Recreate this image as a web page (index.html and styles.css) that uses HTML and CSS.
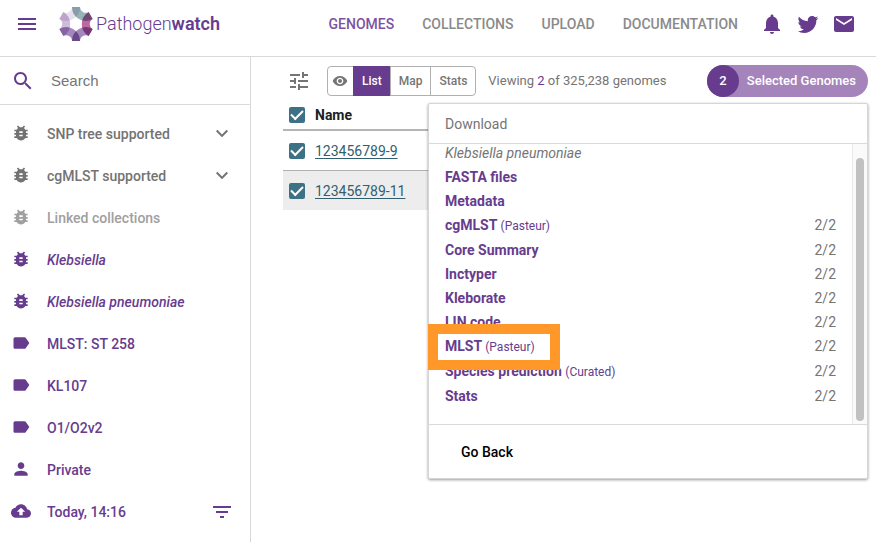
FILE: index.html
```html
<!DOCTYPE html>
<html lang="en">
<head>
<meta charset="utf-8">
<meta name="viewport" content="width=device-width, initial-scale=1">
<title>Pathogenwatch</title>
<link rel="stylesheet" href="styles.css">
</head>
<body>
<svg class="sprite" aria-hidden="true">
  <symbol id="bug" viewBox="0 0 24 24"><path d="M20 8h-2.81c-.45-.78-1.07-1.45-1.82-1.96L17 4.41 15.59 3l-2.17 2.17C12.96 5.06 12.49 5 12 5s-.96.06-1.41.17L8.41 3 7 4.41l1.62 1.63C7.88 6.55 7.26 7.22 6.81 8H4v2h2.09c-.05.33-.09.66-.09 1v1H4v2h2v1c0 .34.04.67.09 1H4v2h2.81c1.04 1.79 2.97 3 5.19 3s4.15-1.21 5.19-3H20v-2h-2.09c.05-.33.09-.66.09-1v-1h2v-2h-2v-1c0-.34-.04-.67-.09-1H20V8zm-6 8h-4v-2h4v2zm0-4h-4v-2h4v2z"/></symbol>
  <symbol id="label" viewBox="0 0 24 24"><path d="M17.63 5.84C17.27 5.33 16.67 5 16 5L5 5.01C3.9 5.01 3 5.9 3 7v10c0 1.1.9 1.99 2 1.99L16 19c.67 0 1.27-.33 1.63-.84L22 12l-4.37-6.16z"/></symbol>
  <symbol id="chevron" viewBox="0 0 24 24"><path d="M7.41 7.84L12 12.42l4.59-4.58L18 9.25l-6 6-6-6z"/></symbol>
</svg>

<header class="header">
  <button class="icon-button menu" aria-label="Menu"><svg class="icon" viewBox="0 0 24 24"><path d="M3 18h18v-2H3v2zm0-5h18v-2H3v2zm0-7v2h18V6H3z"/></svg></button>
  <a class="brand" href="#">
    <svg class="brand-mark" viewBox="-18 -18 36 36" aria-hidden="true">
      <path stroke="#e8dfee" d="M-14.7 -8.5A9.800 9.800 0 0 0 0 -17"/>
      <path stroke="#cfbcdc" d="M-14.7 8.500A9.800 9.800 0 0 0 -14.700 -8.500"/>
      <path stroke="#97b3b8" d="M0 -17A9.800 9.800 0 0 0 14.700 -8.500"/>
      <path stroke="#bb68a3" d="M14.700 -8.500A9.800 9.800 0 0 0 14.700 8.500"/>
      <path stroke="#a487bd" d="M14.700 8.500A9.800 9.800 0 0 0 0 17"/>
      <path stroke="#a487bd" d="M0 17A9.800 9.800 0 0 0 -14.700 8.500"/>
    </svg>
    <span class="brand-name">Pathogen<b>watch</b></span>
  </a>
  <nav class="nav">
    <a class="active" href="#">GENOMES</a>
    <a href="#">COLLECTIONS</a>
    <a href="#">UPLOAD</a>
    <a href="#">DOCUMENTATION</a>
  </nav>
  <div class="header-icons">
    <a href="#" aria-label="Notifications"><svg class="icon" viewBox="0 0 24 24"><path d="M12 22c1.1 0 2-.9 2-2h-4c0 1.1.89 2 2 2zm6-6v-5c0-3.07-1.64-5.64-4.5-6.32V4c0-.83-.67-1.5-1.5-1.5s-1.5.67-1.5 1.5v.68C7.63 5.36 6 7.92 6 11v5l-2 2v1h16v-1l-2-2z"/></svg></a>
    <a href="#" aria-label="Twitter"><svg class="icon" viewBox="0 0 24 24"><path d="M22.46 6c-.77.35-1.6.58-2.46.69.88-.53 1.56-1.37 1.88-2.38-.83.5-1.75.85-2.72 1.05C18.37 4.5 17.26 4 16 4c-2.35 0-4.27 1.92-4.27 4.29 0 .34.04.67.11.98C8.28 9.09 5.11 7.38 3 4.79c-.37.63-.58 1.37-.58 2.15 0 1.49.75 2.81 1.91 3.56-.71 0-1.37-.2-1.95-.5v.03c0 2.08 1.48 3.82 3.44 4.21a4.22 4.22 0 0 1-1.93.07 4.28 4.28 0 0 0 4 2.98 8.521 8.521 0 0 1-5.33 1.84c-.34 0-.68-.02-1.02-.06C3.44 20.29 5.7 21 8.12 21 16 21 20.33 14.46 20.33 8.79c0-.19 0-.37-.01-.56.84-.6 1.56-1.36 2.14-2.23z"/></svg></a>
    <a href="#" aria-label="Email"><svg class="icon" viewBox="0 0 24 24"><path d="M20 4H4c-1.100 0-1.990.9-1.990 2L2 18c0 1.100.9 2 2 2h16c1.100 0 2-.9 2-2V6c0-1.100-.9-2-2-2zm0 4l-8 5-8-5V6l8 5 8-5v2z"/></svg></a>
  </div>
</header>

<div class="body">
  <aside class="sidebar">
    <label class="search">
      <svg class="icon" viewBox="0 0 24 24" aria-hidden="true"><path d="M15.5 14h-.79l-.28-.27C15.41 12.59 16 11.11 16 9.500 16 5.910 13.090 3 9.500 3S3 5.910 3 9.500 5.910 16 9.500 16c1.610 0 3.090-.59 4.230-1.570l.27.28v.79l5 4.990L20.490 19l-4.990-5zm-6 0C7.010 14 5 11.990 5 9.500S7.010 5 9.500 5 14 7.010 14 9.500 11.990 14 9.500 14z"/></svg>
      <input type="text" placeholder="Search" aria-label="Search">
    </label>
    <div class="filters">
      <button class="filter muted"><svg class="icon"><use href="#bug"/></svg><span>SNP tree supported</span><svg class="icon end"><use href="#chevron"/></svg></button>
      <button class="filter muted"><svg class="icon"><use href="#bug"/></svg><span>cgMLST supported</span><svg class="icon end"><use href="#chevron"/></svg></button>
      <button class="filter faint"><svg class="icon"><use href="#bug"/></svg><span>Linked collections</span></button>
      <button class="filter"><svg class="icon"><use href="#bug"/></svg><i>Klebsiella</i></button>
      <button class="filter"><svg class="icon"><use href="#bug"/></svg><i>Klebsiella pneumoniae</i></button>
      <button class="filter"><svg class="icon"><use href="#label"/></svg><span>MLST: ST 258</span></button>
      <button class="filter"><svg class="icon"><use href="#label"/></svg><span>KL107</span></button>
      <button class="filter"><svg class="icon"><use href="#label"/></svg><span>O1/O2v2</span></button>
      <button class="filter"><svg class="icon" viewBox="0 0 24 24"><path d="M12 12c2.210 0 4-1.790 4-4s-1.790-4-4-4-4 1.790-4 4 1.790 4 4 4zm0 2c-2.670 0-8 1.340-8 4v2h16v-2c0-2.660-5.330-4-8-4z"/></svg><span>Private</span></button>
      <button class="filter"><svg class="icon" viewBox="0 0 24 24"><path d="M19.350 10.040C18.670 6.590 15.640 4 12 4 9.110 4 6.600 5.640 5.350 8.040 2.340 8.360 0 10.910 0 14c0 3.310 2.690 6 6 6h13c2.760 0 5-2.240 5-5 0-2.640-2.050-4.780-4.650-4.960zM14 13v4h-4v-4H7l5-5 5 5h-3z"/></svg><span>Today, 14:16</span><svg class="icon end" viewBox="0 0 24 24"><path d="M10 18h4v-2h-4v2zM3 6v2h18V6H3zm3 7h12v-2H6v2z"/></svg></button>
    </div>
  </aside>

  <main class="main">
    <div class="toolbar">
      <button class="icon-button tune" aria-label="Filters"><svg class="icon" viewBox="0 0 24 24"><path d="M3 17v2h6v-2H3zM3 5v2h10V5H3zm10 16v-2h8v-2h-8v-2h-2v6h2zM7 9v2H3v2h4v2h2V9H7zm14 4v-2H11v2h10zm-6-4h2V7h4V5h-4V3h-2v6z"/></svg></button>
      <div class="views">
        <button class="eye" aria-label="View"><svg class="icon" viewBox="0 0 24 24"><path d="M12 4.500C7 4.500 2.730 7.610 1 12c1.730 4.390 6 7.500 11 7.500s9.270-3.110 11-7.500c-1.730-4.390-6-7.500-11-7.500zM12 17c-2.760 0-5-2.240-5-5s2.240-5 5-5 5 2.240 5 5-2.240 5-5 5zm0-8c-1.660 0-3 1.340-3 3s1.340 3 3 3 3-1.340 3-3-1.340-3-3-3z"/></svg></button>
        <button class="on">List</button>
        <button>Map</button>
        <button>Stats</button>
      </div>
      <p class="summary">Viewing <b>2</b> of 325,238 genomes</p>
      <button class="selected"><span class="count">2</span><span>Selected Genomes</span></button>
    </div>

    <table class="genomes">
      <thead>
        <tr><th class="tick"><input type="checkbox" checked aria-label="Select all"></th><th>Name</th></tr>
      </thead>
      <tbody>
        <tr><td class="tick"><input type="checkbox" checked aria-label="Select 123456789-9"></td><td><a href="#">123456789-9</a></td></tr>
        <tr class="shaded"><td class="tick"><input type="checkbox" checked aria-label="Select 123456789-11"></td><td><a href="#">123456789-11</a></td></tr>
      </tbody>
    </table>

    <section class="popover" aria-label="Download">
      <h2>Download</h2>
      <div class="scroll-area">
        <div class="downloads">
          <h3>Klebsiella pneumoniae</h3>
          <ul>
            <li><a href="#">FASTA files</a></li>
            <li><a href="#">Metadata</a></li>
            <li class="noted"><a href="#">cgMLST <small>(Pasteur)</small></a><span>2/2</span></li>
            <li><a href="#">Core Summary</a><span>2/2</span></li>
            <li><a href="#">Inctyper</a><span>2/2</span></li>
            <li><a href="#">Kleborate</a><span>2/2</span></li>
            <li><a href="#">LIN code</a><span>2/2</span></li>
            <li class="noted highlighted"><a href="#">MLST <small>(Pasteur)</small></a><span>2/2</span></li>
            <li class="noted"><a href="#">Species prediction <small>(Curated)</small></a><span>2/2</span></li>
            <li><a href="#">Stats</a><span>2/2</span></li>
          </ul>
        </div>
        <div class="track"><div class="thumb"></div></div>
      </div>
      <footer><button>Go Back</button></footer>
    </section>
  </main>
</div>
</body>
</html>
```
FILE: styles.css
```css
:root {
  --purple: #673c8e;
  --grey: #757575;
  --line: #d9d9d9;
  --teal: #3c7186;
}

*, ::before, ::after { box-sizing: border-box; }

body {
  margin: 0;
  min-height: 100vh;
  display: flex;
  flex-direction: column;
  overflow: hidden;
  background: #fff;
  color: var(--grey);
  font: 14px/20px Roboto, sans-serif;
}

button, input { font: inherit; color: inherit; }
button { padding: 0; border: 0; background: none; cursor: pointer; }
a { color: inherit; text-decoration: none; }
h2, h3, p, ul { margin: 0; padding: 0; font-size: inherit; font-weight: 400; }

.sprite { position: absolute; width: 0; height: 0; }
.icon { display: block; flex: none; width: 24px; height: 24px; fill: currentColor; }

.header {
  display: flex;
  align-items: center;
  height: 57px;
  padding: 0 20px 8px 15px;
  border-bottom: 1px solid var(--line);
  color: var(--purple);
}
.brand { display: flex; align-items: center; margin-left: 19px; }
.brand-mark { width: 36px; height: 36px; fill: none; stroke-width: 8px; isolation: isolate; }
.brand-mark path { mix-blend-mode: multiply; }
.brand-name { margin-left: 2px; font-size: 18px; font-weight: 300; line-height: 24px; }
.brand-name b { font-weight: 600; }
.nav {
  display: flex;
  gap: 28px;
  margin-left: auto;
  color: #8a8a8a;
  font-weight: 500;
}
.nav .active { color: #7e529f; }
.header-icons { display: flex; gap: 12px; margin-left: 22px; }

.body { flex: 1; display: flex; }

.sidebar { flex: none; width: 251px; border-right: 1px solid var(--line); }
.search {
  display: flex;
  align-items: center;
  gap: 16px;
  height: 48px;
  padding: 0 11px;
  border-bottom: 1px solid var(--line);
  color: var(--purple);
}
.search input { width: 100%; padding: 0; border: 0; outline: 0; font: 15px/20px "Liberation Sans", sans-serif; }
.search input::placeholder { color: var(--grey); opacity: 1; }
.filters { padding-top: 8px; }
.filter {
  display: flex;
  align-items: center;
  gap: 16px;
  width: 100%;
  height: 42px;
  padding: 0 16px 0 11px;
  color: var(--purple);
  font-weight: 500;
  text-align: left;
}
.filter .icon { width: 20px; height: 20px; margin-bottom: 2px; }
.filter .icon.end { width: 24px; height: 24px; margin: 0 0 0 auto; }
.filter.muted { color: #737373; }
.filter.faint { color: #a0a0a0; }

.main { position: relative; flex: 1; min-width: 0; padding: 0 8px 0 32px; }
.toolbar { display: flex; align-items: center; height: 48px; padding-left: 4px; }
.views {
  display: flex;
  height: 30px;
  margin-left: 16px;
  border: 1px solid #b0b0b0;
  border-radius: 4px;
  font-size: 12px;
  font-weight: 500;
}
.views button { padding: 0 8px; border-left: 1px solid #b0b0b0; }
.views .eye { padding: 0 5px 0 4px; border-left: 0; }
.views .eye .icon { width: 16px; height: 16px; }
.views .on { margin: -1px 0; border-color: var(--purple); background: var(--purple); color: #fff; }
.summary { margin-left: 12px; font-size: 13px; }
.summary b { color: var(--purple); font-weight: 400; }
.selected {
  display: flex;
  align-items: center;
  gap: 8px;
  height: 32px;
  margin-left: auto;
  padding-right: 12px;
  border-radius: 16px;
  background: #a584bb;
  color: #fff;
  font-size: 13px;
  font-weight: 500;
}
.count { width: 32px; border-radius: 16px; background: var(--purple); line-height: 32px; }

.genomes { width: 100%; border-collapse: separate; border-spacing: 0; }
.genomes th {
  height: 25px;
  padding: 0 0 4px;
  border-bottom: 2px solid #b5b5b5;
  color: #212121;
  font-weight: 700;
  text-align: left;
}
.genomes td { height: 40px; padding: 0; border-bottom: 1px solid #b0b0b0; }
.genomes .shaded td { height: 39px; border-bottom: 0; background: #ededed; }
.genomes .tick { width: 32px; padding-left: 6px; }
.genomes td a { color: #315f70; text-decoration: underline; text-underline-offset: 2px; }
.tick input {
  appearance: none;
  display: grid;
  place-items: center;
  width: 16px;
  height: 16px;
  margin: 0;
  border-radius: 2px;
  background: var(--teal);
}
.tick input:checked::before {
  content: "";
  width: 12px;
  height: 7px;
  margin-bottom: 3px;
  border: solid #fff;
  border-width: 0 0 2px 2px;
  transform: rotate(-45deg);
}

.popover {
  position: absolute;
  top: 46px;
  right: 8px;
  width: 440px;
  border: 1px solid #d6d6d6;
  border-radius: 2px;
  background: #fff;
  box-shadow: 0 1px 3px rgba(0, 0, 0, .4);
}
.popover h2 { padding: 10px 16px 9px; border-bottom: 1px solid var(--line); }
.scroll-area { display: flex; height: 280px; }
.downloads { flex: 1; padding: 0 16px; }
.downloads h3 { font-style: italic; line-height: 19px; }
.downloads ul { padding-top: 2px; list-style: none; }
.downloads li { position: relative; display: flex; justify-content: space-between; line-height: 24px; }
.downloads .noted { height: 25px; }
.downloads a { color: var(--purple); font-weight: 700; }
.downloads small { font-size: 12px; font-weight: 400; line-height: 16px; }
.highlighted::after {
  content: "";
  position: absolute;
  z-index: 1;
  top: -10px;
  left: -17px;
  width: 132px;
  height: 46px;
  border: 10px solid #ff9829;
}
.track {
  width: 15px;
  padding: 14px 3px 3px;
  border-left: 1px solid #e8e8e8;
  background: #fafafa;
}
.thumb { width: 8px; height: 100%; border-radius: 4px; background: #c1c1c1; }
.popover footer { padding: 17px 32px 16px; border-top: 1px solid var(--line); }
.popover footer button { display: block; color: #000; font-weight: 500; }
```
